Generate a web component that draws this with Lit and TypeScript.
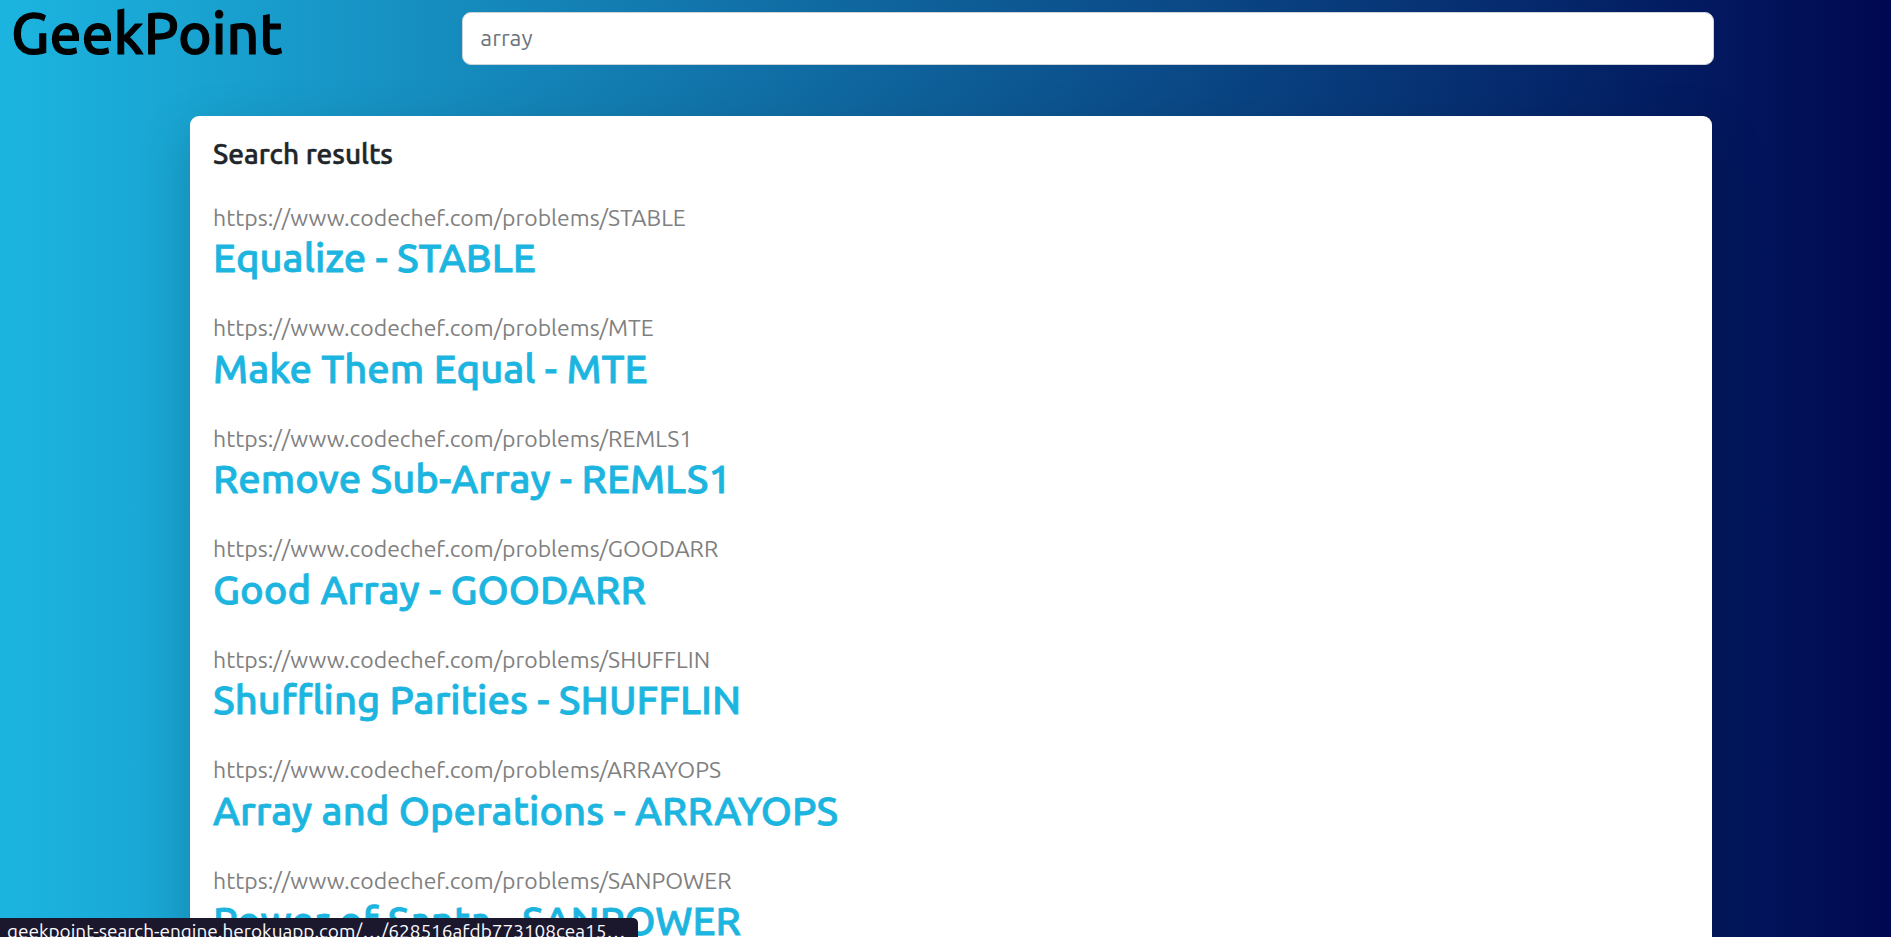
import { LitElement, html, css } from "lit";
import { customElement, property, state } from "lit/decorators.js";

interface Result {
  name: string;
  code: string;
}

const RESULTS: Result[] = [
  { name: "Equalize", code: "STABLE" },
  { name: "Make Them Equal", code: "MTE" },
  { name: "Remove Sub-Array", code: "REMLS1" },
  { name: "Good Array", code: "GOODARR" },
  { name: "Shuffling Parities", code: "SHUFFLIN" },
  { name: "Array and Operations", code: "ARRAYOPS" },
  { name: "Power of Santa", code: "SANPOWER" },
];

@customElement("search-result")
class SearchResult extends LitElement {
  static styles = css`
    :host {
      display: block;
    }
    .url {
      margin: 0;
      font-size: 23px;
      line-height: 1.5;
      color: #808080;
    }
    .title {
      margin: 0;
      font-size: 40px;
      font-weight: 500;
      line-height: 1.15;
      -webkit-text-stroke: 0.02em #1cb5e0;
    }
    .link {
      color: #1cb5e0;
      text-decoration: none;
    }
  `;

  @property({ attribute: false }) result!: Result;

  render() {
    const { name, code } = this.result;
    const url = `https://www.codechef.com/problems/${code}`;
    return html`
      <p class="url">${url}</p>
      <h2 class="title"><a class="link" href=${url}>${name} - ${code}</a></h2>
    `;
  }
}

@customElement("app-root")
class AppRoot extends LitElement {
  static styles = css`
    :host {
      display: block;
      box-sizing: border-box;
      height: 100vh;
      overflow: hidden;
      font-family: Ubuntu, "Noto Sans", sans-serif;
      color: #212529;
      background: linear-gradient(90deg, #1cb5e0 0%, #000851 100%);
    }
    .header {
      display: grid;
      grid-template-columns: 24.45% 1fr 9.35%;
      align-items: start;
      padding-top: 12px;
    }
    .logo {
      margin: -13px 0 0 11px;
      font-size: 57px;
      font-weight: 500;
      line-height: 1.2;
      color: #000;
      -webkit-text-stroke: 0.02em #000;
    }
    .search {
      box-sizing: border-box;
      width: 100%;
      height: 53px;
      padding: 7px 17px 9px;
      border: 1px solid #ced4da;
      border-radius: 9px;
      outline: none;
      background: #fff;
      font: inherit;
      font-size: 23px;
      color: #6c757d;
    }
    .card {
      display: flex;
      flex-direction: column;
      gap: 30px;
      margin: 49px 9.45% 0 10.05%;
      padding: 21px 23px;
      border-radius: 9px;
      background: #fff;
      box-shadow: 0 18px 53px rgba(0, 0, 0, 0.175);
    }
    .heading {
      margin: 0;
      font-size: 28px;
      font-weight: 500;
      line-height: 1.2;
      -webkit-text-stroke: 0.02em #212529;
    }
    .status {
      position: fixed;
      left: 0;
      bottom: -7px;
      padding: 0 13px 0 7px;
      border-top-right-radius: 5px;
      background: #1b182e;
      font-size: 19px;
      line-height: 26px;
      color: #fbfbfe;
    }
  `;

  @state() private query = "array";

  private onInput(e: Event) {
    this.query = (e.target as HTMLInputElement).value;
  }

  render() {
    return html`
      <header class="header">
        <h1 class="logo">GeekPoint</h1>
        <input class="search" type="text" aria-label="Search problems" .value=${this.query} @input=${this.onInput} />
      </header>
      <main class="card">
        <h4 class="heading">Search results</h4>
        ${RESULTS.map((r) => html`<search-result .result=${r}></search-result>`)}
      </main>
      <div class="status">geekpoint-search-engine.herokuapp.com/…/628516afdb773108cea15…</div>
    `;
  }
}
